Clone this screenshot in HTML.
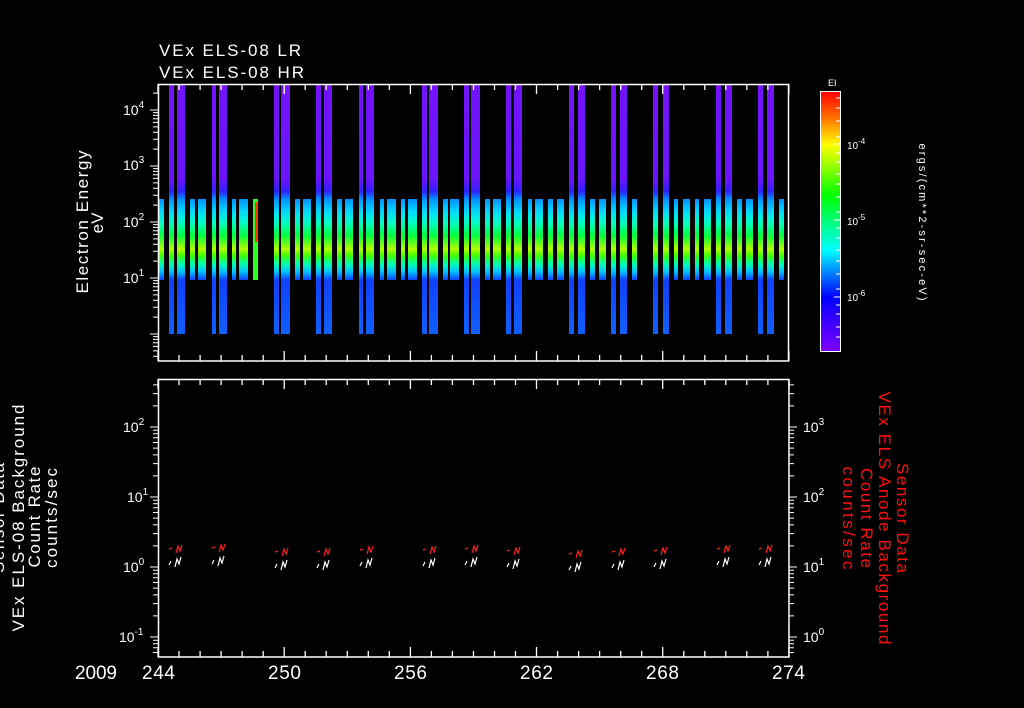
<!DOCTYPE html>
<html><head><meta charset="utf-8"><style>
html,body{margin:0;padding:0;background:#000;width:1024px;height:708px;overflow:hidden}
svg{display:block}
text{font-family:"Liberation Sans",sans-serif;fill:#fff}
</style></head><body>
<svg width="1024" height="708" viewBox="0 0 1024 708" xmlns="http://www.w3.org/2000/svg">
<defs>
<linearGradient id="gt" x1="0" y1="0" x2="0" y2="1">
<stop offset="0" stop-color="#7412ff"/><stop offset="0.38" stop-color="#6a14ff"/>
<stop offset="0.43" stop-color="#3020ff"/><stop offset="0.46" stop-color="#0090ff"/>
<stop offset="0.509" stop-color="#00d8ff"/><stop offset="0.557" stop-color="#00ffc0"/>
<stop offset="0.606" stop-color="#00ff40"/><stop offset="0.661" stop-color="#b0ff00"/>
<stop offset="0.687" stop-color="#40ff00"/><stop offset="0.719" stop-color="#00ffb0"/>
<stop offset="0.752" stop-color="#00c0ff"/><stop offset="0.784" stop-color="#1040ff"/>
<stop offset="1" stop-color="#1060ff"/>
</linearGradient>
<linearGradient id="gm" x1="0" y1="0" x2="0" y2="1">
<stop offset="0" stop-color="#0090ff"/><stop offset="0.15" stop-color="#00d8ff"/>
<stop offset="0.3" stop-color="#00ffc0"/><stop offset="0.45" stop-color="#00ff40"/>
<stop offset="0.62" stop-color="#b0ff00"/><stop offset="0.7" stop-color="#40ff00"/>
<stop offset="0.8" stop-color="#00ffb0"/><stop offset="0.9" stop-color="#00c0ff"/>
<stop offset="1" stop-color="#1040ff"/>
</linearGradient>
<linearGradient id="gc" x1="0" y1="0" x2="0" y2="1">
<stop offset="0" stop-color="#ff0000"/><stop offset="0.1" stop-color="#ff7000"/>
<stop offset="0.206" stop-color="#ffff00"/><stop offset="0.4" stop-color="#00ff00"/>
<stop offset="0.61" stop-color="#00ffff"/><stop offset="0.79" stop-color="#0000ff"/>
<stop offset="1" stop-color="#8000ff"/>
</linearGradient>
<g id="dt" stroke="#fff" stroke-width="1">
<path d="M-8,0H0M-5,-16.9H0M-5,-26.7H0M-5,-33.7H0M-5,-39.1H0M-5,-43.6H0M-5,-47.3H0M-5,-50.6H0M-5,-53.4H0"/>
</g>
<g id="db" stroke="#fff" stroke-width="1">
<path d="M-8,0H0M-5,-21.1H0M-5,-33.4H0M-5,-42.1H0M-5,-48.9H0M-5,-54.5H0M-5,-59.2H0M-5,-63.2H0M-5,-66.8H0"/>
</g>
<g id="xt" stroke="#fff" stroke-width="1.3">
<path d="M158,0v-10M179,0v-6M200.1,0v-6M221.1,0v-6M242.1,0v-6M263.2,0v-6M284.2,0v-10M305.2,0v-6M326.2,0v-6M347.3,0v-6M368.3,0v-6M389.3,0v-6M410.4,0v-10M431.4,0v-6M452.4,0v-6M473.5,0v-6M494.5,0v-6M515.5,0v-6M536.5,0v-10M557.6,0v-6M578.6,0v-6M599.6,0v-6M620.7,0v-6M641.7,0v-6M662.7,0v-10M683.8,0v-6M704.8,0v-6M725.8,0v-6M746.8,0v-6M767.9,0v-6M788.9,0v-10"/>
</g>
<g id="sq" fill="none" stroke-width="1.2">
<path stroke="#ff2020" d="M0,-14l3,-1M7,-10l2,-7 2,5 2,-6"/>
<path stroke="#fff" d="M0,2l2,-4M6,4l2,-8 2,5 2,-7"/>
</g>
<clipPath id="ct"><rect x="140" y="84" width="30" height="277"/></clipPath>
<clipPath id="cb"><rect x="140" y="379" width="670" height="278"/></clipPath>
</defs>

<text x="159" y="56" font-size="17" textLength="142">VEx ELS-08 LR</text>
<text x="159" y="78" font-size="17" textLength="145">VEx ELS-08 HR</text>

<g fill="url(#gt)">
<rect x="169" y="84" width="5" height="250"/><rect x="177" y="84" width="8" height="250"/>
<rect x="212" y="84" width="4" height="250"/><rect x="219" y="84" width="8" height="250"/>
<rect x="274" y="84" width="5" height="250"/><rect x="281" y="84" width="9" height="250"/>
<rect x="316" y="84" width="5" height="250"/><rect x="324" y="84" width="8" height="250"/>
<rect x="359" y="84" width="4" height="250"/><rect x="366" y="84" width="8" height="250"/>
<rect x="422" y="84" width="5" height="250"/><rect x="429" y="84" width="9" height="250"/>
<rect x="464" y="84" width="5" height="250"/><rect x="471" y="84" width="9" height="250"/>
<rect x="506" y="84" width="5" height="250"/><rect x="514" y="84" width="8" height="250"/>
<rect x="569" y="84" width="5" height="250"/><rect x="578" y="84" width="7" height="250"/>
<rect x="611" y="84" width="5" height="250"/><rect x="620" y="84" width="7" height="250"/>
<rect x="653" y="84" width="5" height="250"/><rect x="663" y="84" width="6" height="250"/>
<rect x="716" y="84" width="5" height="250"/><rect x="725" y="84" width="7" height="250"/>
<rect x="758" y="84" width="5" height="250"/><rect x="767" y="84" width="7" height="250"/>
</g>
<g fill="url(#gm)">
<rect x="158" y="199" width="6" height="81"/><rect x="190" y="199" width="5" height="81"/>
<rect x="198" y="199" width="8" height="81"/><rect x="232" y="199" width="4" height="81"/>
<rect x="239" y="199" width="9" height="81"/><rect x="295" y="199" width="5" height="81"/>
<rect x="303" y="199" width="8" height="81"/><rect x="337" y="199" width="5" height="81"/>
<rect x="345" y="199" width="8" height="81"/><rect x="380" y="199" width="4" height="81"/>
<rect x="387" y="199" width="9" height="81"/><rect x="401" y="199" width="4" height="81"/>
<rect x="408" y="199" width="9" height="81"/><rect x="443" y="199" width="5" height="81"/>
<rect x="450" y="199" width="9" height="81"/><rect x="485" y="199" width="5" height="81"/>
<rect x="493" y="199" width="8" height="81"/><rect x="528" y="199" width="4" height="81"/>
<rect x="535" y="199" width="8" height="81"/><rect x="548" y="199" width="5" height="81"/>
<rect x="557" y="199" width="7" height="81"/><rect x="590" y="199" width="5" height="81"/>
<rect x="599" y="199" width="7" height="81"/><rect x="632" y="199" width="5" height="81"/>
<rect x="674" y="199" width="4" height="81"/><rect x="683" y="199" width="7" height="81"/>
<rect x="695" y="199" width="4" height="81"/><rect x="704" y="199" width="7" height="81"/>
<rect x="737" y="199" width="5" height="81"/><rect x="746" y="199" width="7" height="81"/>
<rect x="779" y="199" width="5" height="81"/>
</g>
<rect x="253" y="199" width="5" height="81" fill="#30ff20"/>
<rect x="255" y="202" width="3" height="40" fill="#ff3000"/>

<rect x="158.5" y="84.5" width="630" height="276.5" fill="none" stroke="#fff" stroke-width="1.5"/>
<rect x="158.5" y="379.5" width="630.5" height="277.5" fill="none" stroke="#fff" stroke-width="1.5"/>

<use href="#xt" y="361"/>
<use href="#xt" transform="translate(0,84) scale(1,-1)"/>
<use href="#xt" y="657"/>
<use href="#xt" transform="translate(0,379) scale(1,-1)"/>

<g clip-path="url(#ct)">
<use href="#dt" x="158" y="390"/><use href="#dt" x="158" y="334"/><use href="#dt" x="158" y="278"/>
<use href="#dt" x="158" y="222"/><use href="#dt" x="158" y="166"/><use href="#dt" x="158" y="110"/>
</g>
<g clip-path="url(#cb)">
<use href="#db" x="158" y="707"/><use href="#db" x="158" y="637"/><use href="#db" x="158" y="567"/>
<use href="#db" x="158" y="497"/><use href="#db" x="158" y="427"/>
<g transform="translate(789,0) scale(-1,1)">
<use href="#db" y="707"/><use href="#db" y="637"/><use href="#db" y="567"/><use href="#db" y="497"/><use href="#db" y="427"/>
</g>
</g>

<g font-size="14">
<text x="123" y="115">10<tspan font-size="10" dy="-7">4</tspan></text>
<text x="123" y="170">10<tspan font-size="10" dy="-7">3</tspan></text>
<text x="123" y="227">10<tspan font-size="10" dy="-7">2</tspan></text>
<text x="123" y="283">10<tspan font-size="10" dy="-7">1</tspan></text>
<text x="123" y="432">10<tspan font-size="10" dy="-7">2</tspan></text>
<text x="127" y="502">10<tspan font-size="10" dy="-7">1</tspan></text>
<text x="123" y="572">10<tspan font-size="10" dy="-7">0</tspan></text>
<text x="119" y="642">10<tspan font-size="10" dy="-7">-1</tspan></text>
<text x="803" y="432">10<tspan font-size="10" dy="-7">3</tspan></text>
<text x="803" y="502">10<tspan font-size="10" dy="-7">2</tspan></text>
<text x="803" y="572">10<tspan font-size="10" dy="-7">1</tspan></text>
<text x="803" y="642">10<tspan font-size="10" dy="-7">0</tspan></text>
</g>

<text transform="translate(88,222) rotate(-90)" text-anchor="middle" font-size="17" textLength="143">Electron Energy</text>
<text transform="translate(103,223) rotate(-90)" text-anchor="middle" font-size="17">eV</text>

<g font-size="17" text-anchor="middle">
<text transform="translate(4,518) rotate(-90)" textLength="110">Sensor Data</text>
<text transform="translate(24,518) rotate(-90)" textLength="227">VEx ELS-08 Background</text>
<text transform="translate(40,517) rotate(-90)" textLength="101">Count Rate</text>
<text transform="translate(57,518) rotate(-90)" textLength="100">counts/sec</text>
</g>
<g font-size="17" text-anchor="middle">
<text transform="translate(897,518) rotate(90)" textLength="110" style="fill:#ff1010">Sensor Data</text>
<text transform="translate(879,518) rotate(90)" textLength="253" style="fill:#ff1010">VEx ELS Anode Background</text>
<text transform="translate(861,518) rotate(90)" textLength="100" style="fill:#ff1010">Count Rate</text>
<text transform="translate(843,518) rotate(90)" textLength="103" style="fill:#ff1010">counts/sec</text>
</g>

<g font-size="19">
<text x="75" y="679" textLength="42">2009</text>
<text x="142" y="679" textLength="33">244</text>
<text x="268" y="679" textLength="33">250</text>
<text x="394" y="679" textLength="33">256</text>
<text x="520" y="679" textLength="33">262</text>
<text x="646" y="679" textLength="33">268</text>
<text x="772" y="679" textLength="33">274</text>
</g>

<use href="#sq" x="169" y="563"/><use href="#sq" x="212" y="562"/>
<use href="#sq" x="275" y="566"/><use href="#sq" x="317" y="566"/>
<use href="#sq" x="360" y="564"/><use href="#sq" x="423" y="564"/>
<use href="#sq" x="465" y="563"/><use href="#sq" x="507" y="565"/>
<use href="#sq" x="569" y="568"/><use href="#sq" x="612" y="566"/>
<use href="#sq" x="654" y="565"/><use href="#sq" x="717" y="563"/>
<use href="#sq" x="759" y="563"/>

<text x="828" y="86" font-size="9">EI</text>
<rect x="820.5" y="91.5" width="20" height="260" fill="url(#gc)" stroke="#fff" stroke-width="1"/>
<path stroke="#fff" stroke-width="1" d="M840,144h-6M840,220h-6M840,297h-6M840,98h-4M840,108h-4M840,121h-4M840,137h-4M840,153h-4M840,162h-4M840,174h-4M840,184h-4M840,197h-4M840,212h-4M840,228h-4M840,238h-4M840,250h-4M840,261h-4M840,274h-4M840,289h-4M840,305h-4M840,314h-4M840,327h-4M840,337h-4"/>
<g font-size="10">
<text x="847" y="149">10<tspan font-size="8" dy="-5">-4</tspan></text>
<text x="847" y="225">10<tspan font-size="8" dy="-5">-5</tspan></text>
<text x="847" y="301">10<tspan font-size="8" dy="-5">-6</tspan></text>
</g>
<text transform="translate(919,222) rotate(90)" text-anchor="middle" font-size="11" textLength="157">ergs/(cm**2-sr-sec-eV)</text>
</svg>
</body></html>
